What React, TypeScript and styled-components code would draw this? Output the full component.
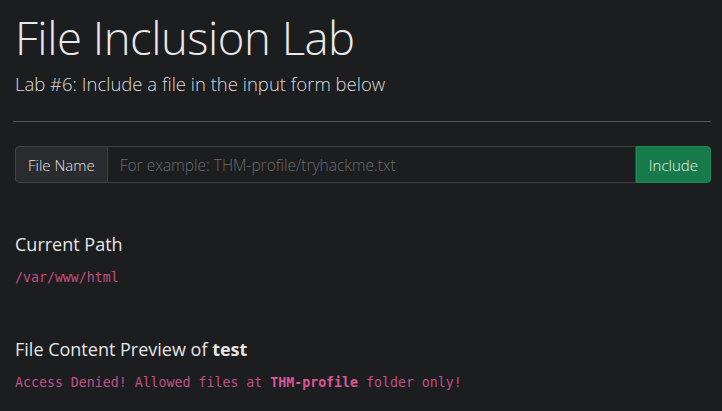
import styled, { createGlobalStyle } from "styled-components";

const GlobalStyle = createGlobalStyle`
  html, body {
    margin: 0;
    padding: 0;
    background: #1c1d1f;
  }
  * {
    box-sizing: border-box;
  }
`;

function App() {
  return (
    <>
      <GlobalStyle />
      <Page>
        <Title>File Inclusion Lab</Title>
        <Lead>Lab #6: Include a file in the input form below</Lead>
        <Divider />
        <InputGroup>
          <GroupLabel>File Name</GroupLabel>
          <FileInput placeholder="For example: THM-profile/tryhackme.txt" />
          <IncludeButton>Include</IncludeButton>
        </InputGroup>

        <Section>
          <SectionTitle>Current Path</SectionTitle>
          <Code>/var/www/html</Code>
        </Section>

        <Section>
          <SectionTitle>
            File Content Preview of <b>test</b>
          </SectionTitle>
          <Code>
            Access Denied! Allowed files at <b>THM-profile</b> folder only!
          </Code>
        </Section>
      </Page>
    </>
  );
}

export default App;

const Page = styled.div`
  width: 696px;
  margin-left: 15px;
  padding-top: 9px;
  font-family: "Open Sans", "Noto Sans", sans-serif;
  color: #e6e6e6;
`;

const Title = styled.h1`
  margin: 0;
  font-size: 45.5px;
  font-weight: 300;
  line-height: 56px;
  color: #e8e8e8;
  letter-spacing: -0.5px;
`;

const Lead = styled.p`
  margin: 5px 0 0;
  font-size: 18.5px;
  font-weight: 300;
  line-height: 28px;
  color: #dcdcdc;
`;

const Divider = styled.hr`
  margin: 23px 0 24px -2px;
  border: 0;
  border-top: 1px solid #55575b;
`;

const InputGroup = styled.div`
  display: flex;
  height: 37px;
`;

const GroupLabel = styled.span`
  display: flex;
  align-items: center;
  padding: 0 12px;
  background: #2a2b2e;
  border: 1px solid #404145;
  border-radius: 4px 0 0 4px;
  font-size: 15px;
  font-weight: 300;
  color: #e2e2e2;
`;

const FileInput = styled.input`
  flex: 1;
  min-width: 0;
  background: #1c1d1f;
  border: 1px solid #404145;
  border-left: 0;
  padding: 0 12px;
  font-family: "Open Sans", "Noto Sans", sans-serif;
  font-size: 15.5px;
  font-weight: 300;
  color: #e2e2e2;
  outline: none;

  &::placeholder {
    color: #6b6c70;
  }
`;

const IncludeButton = styled.button`
  background: #167a4b;
  border: 1px solid #1d8a57;
  border-radius: 0 4px 4px 0;
  padding: 0 12px;
  font-family: "Open Sans", "Noto Sans", sans-serif;
  font-size: 15px;
  font-weight: 300;
  color: #e9f5ee;
`;

const Section = styled.section`
  margin-top: 49px;

  & + & {
    margin-top: 50px;
  }
`;

const SectionTitle = styled.h4`
  margin: 0;
  font-size: 18px;
  font-weight: 400;
  line-height: 24px;
  color: #e6e6e6;

  b {
    font-weight: 700;
  }
`;

const Code = styled.code`
  display: block;
  margin-top: 13px;
  font-family: "DejaVu Sans Mono", "Liberation Mono", monospace;
  font-size: 13.25px;
  line-height: 18px;
  color: #c24f86;

  b {
    font-weight: 700;
    color: #dc5597;
  }
`;
